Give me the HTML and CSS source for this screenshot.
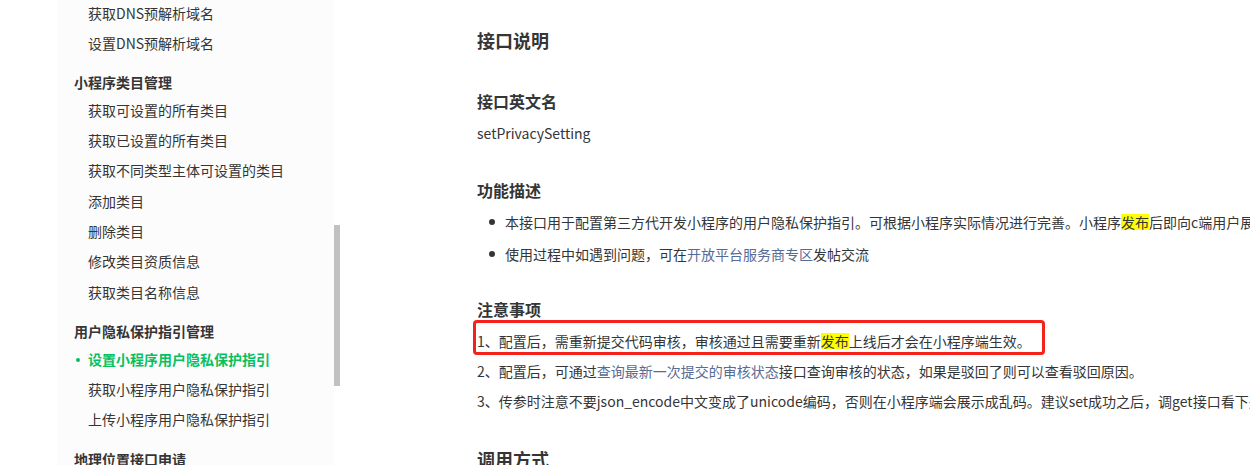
FILE: index.html
```html
<!DOCTYPE html>
<html lang="zh-CN">

<head>
    <meta charset="UTF-8" />
    <title>设置小程序用户隐私保护指引</title>
    <link rel="stylesheet" href="styles.css">
</head>

<body>
    <div class="page">
        <div class="gutter"></div>

        <nav class="sidebar">
            <div class="nav-scroll">
                <div class="nav-group">
                    <a class="nav-item" href="#">获取DNS预解析域名</a>
                    <a class="nav-item" href="#">设置DNS预解析域名</a>
                </div>
                <div class="nav-group">
                    <div class="nav-title">小程序类目管理</div>
                    <a class="nav-item" href="#">获取可设置的所有类目</a>
                    <a class="nav-item" href="#">获取已设置的所有类目</a>
                    <a class="nav-item" href="#">获取不同类型主体可设置的类目</a>
                    <a class="nav-item" href="#">添加类目</a>
                    <a class="nav-item" href="#">删除类目</a>
                    <a class="nav-item" href="#">修改类目资质信息</a>
                    <a class="nav-item" href="#">获取类目名称信息</a>
                </div>
                <div class="nav-group">
                    <div class="nav-title">用户隐私保护指引管理</div>
                    <a class="nav-item active" href="#">设置小程序用户隐私保护指引</a>
                    <a class="nav-item" href="#">获取小程序用户隐私保护指引</a>
                    <a class="nav-item" href="#">上传小程序用户隐私保护指引</a>
                </div>
                <div class="nav-group">
                    <div class="nav-title">地理位置接口申请</div>
                    <a class="nav-item" href="#">申请地理位置接口</a>
                </div>
            </div>
        </nav>

        <div class="scrollbar">
            <div class="scrollbar-thumb"></div>
        </div>

        <main class="content">
            <h2>接口说明</h2>

            <h3>接口英文名</h3>
            <p>setPrivacySetting</p>

            <h3>功能描述</h3>
            <ul class="bullets">
                <li>本接口用于配置第三方代开发小程序的用户隐私保护指引。可根据小程序实际情况进行完善。小程序<span class="hl">发布</span>后即向c端用户展示该指引。</li>
                <li>使用过程中如遇到问题，可在<a href="#">开放平台服务商专区</a>发帖交流</li>
            </ul>

            <h3 class="after-list">注意事项</h3>
            <p class="note boxed">1、配置后，需重新提交代码审核，审核通过且需要重新<span class="hl">发布</span>上线后才会在小程序端生效。</p>
            <p class="note">2、配置后，可通过<a href="#">查询最新一次提交的审核状态</a>接口查询审核的状态，如果是驳回了则可以查看驳回原因。</p>
            <p class="note">3、传参时注意不要json_encode中文变成了unicode编码，否则在小程序端会展示成乱码。建议set成功之后，调get接口看下是否正常显示。</p>

            <h2 class="section">调用方式</h2>
        </main>
    </div>
</body>

</html>
```

FILE: styles.css
```css
html,
body {
    margin: 0;
    padding: 0;
    background: #fff;
    overflow: hidden;
}

body {
    font-family: "Noto Sans CJK SC", "Noto Sans", sans-serif;
    font-size: 14px;
    color: #353535;
}

a {
    text-decoration: none;
}

/* LAYOUT */
.page {
    display: flex;
    height: 465px;
    overflow: hidden;
}

.gutter {
    flex: 0 0 57px;
}

.sidebar {
    flex: 0 0 277px;
    background: #fcfcfc;
    overflow: hidden;
}

.scrollbar {
    flex: 0 0 6px;
}

.scrollbar-thumb {
    margin-top: 225px;
    height: 161px;
    background: #c1c1c1;
}

/* NAV */
.nav-scroll {
    margin-top: -2.5px;
    padding-left: 17px;
}

.nav-group + .nav-group {
    margin-top: 13px;
}

.nav-title {
    font-weight: bold;
    line-height: 22.67px;
    padding-bottom: 1px;
    color: #353535;
}

.nav-item {
    position: relative;
    display: block;
    padding: 4px 0 4px 14px;
    line-height: 22.33px;
    color: #353535;
    white-space: nowrap;
}

.nav-item.active {
    color: #07c160;
    font-weight: bold;
}

.nav-item.active::before {
    content: "";
    position: absolute;
    left: 2px;
    top: 14px;
    width: 4px;
    height: 4px;
    border-radius: 50%;
    background: #07c160;
}

/* CONTENT */
.content {
    flex: 0 0 auto;
    padding: 27px 0 0 137px;
    white-space: nowrap;
}

.content h2 {
    margin: 0 0 36px;
    font-size: 18px;
    line-height: 26px;
    font-weight: bold;
}

.content h2.section {
    margin-top: 33px;
}

.content h3 {
    margin: 33px 0 8px;
    font-size: 16px;
    line-height: 24px;
    font-weight: bold;
}

.content h2 + h3 {
    margin-top: 0;
}

.content h3.after-list {
    margin-top: 31px;
}

.content p {
    margin: 0;
    line-height: 24px;
}

.content a {
    color: #576b95;
}

.bullets {
    list-style: none;
    margin: 0;
    padding: 0;
}

.bullets li {
    position: relative;
    padding-left: 28px;
    line-height: 24px;
    margin-bottom: 8px;
}

.bullets li::before {
    content: "";
    position: absolute;
    left: 12px;
    top: 9px;
    width: 6px;
    height: 6px;
    border-radius: 50%;
    background: #353535;
}

.content p.note {
    margin-bottom: 6px;
}

.hl {
    display: inline-block;
    background: #ffff00;
    line-height: 16px;
}

/* annotation drawn over the first note */
.boxed {
    position: relative;
}

.boxed::after {
    content: "";
    position: absolute;
    left: -4px;
    top: -9px;
    width: 572px;
    height: 35px;
    border: 3px solid #f5221b;
    border-radius: 4px;
    box-sizing: border-box;
}
```
